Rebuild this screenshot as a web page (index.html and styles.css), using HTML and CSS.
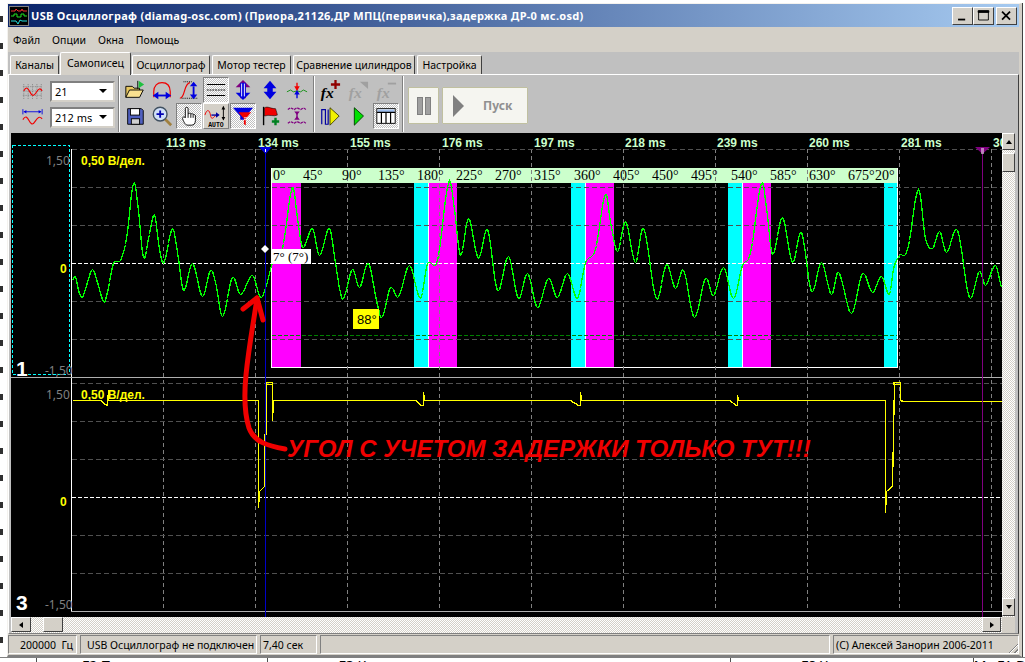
FILE: index.html
```html
<!DOCTYPE html>
<html lang="ru">
<head>
    <meta charset="UTF-8">
    <meta name="viewport" content="width=device-width, initial-scale=1.0">
    <title>USB Осциллограф</title>
    <link rel="stylesheet" href="styles.css">
</head>
<body>
    <div class="desktop">
        <div class="desktop-main">
            <!-- edge of the window behind -->
            <div class="behind-left"></div>

            <div class="window">
                <div class="titlebar">
                    <svg class="app-icon" viewBox="0 0 20 20">
                        <rect width="20" height="20" fill="#000"/>
                        <rect x="0.5" y="0.5" width="19" height="19" fill="none" stroke="#808080"/>
                        <path d="M2 5h4l1-2 2 2h3l1-2 1 2h4" fill="none" stroke="#f03030"/>
                        <path d="M2 10h3v-2h3v3h4v-3h3v2h3" fill="none" stroke="#20e020"/>
                        <path d="M2 15h5l2 3 2-4 2 1h5" fill="none" stroke="#20e0e0"/>
                    </svg>
                    <span class="title-text">USB Осциллограф (diamag-osc.com) (Приора,21126,ДР МПЦ(первичка),задержка ДР-0 мс.osd)</span>
                    <div class="win-btns">
                        <div class="win-btn"><svg viewBox="0 0 20 18"><rect x="5" y="12" width="8" height="2"/></svg></div>
                        <div class="win-btn"><svg viewBox="0 0 20 18"><path d="M4.5 3.5h11v10h-11z M4 3h12v2H4z" fill-rule="nonzero" stroke="#000" fill="none"/><rect x="4" y="3" width="12" height="2"/></svg></div>
                        <div class="win-btn win-btn-close"><svg viewBox="0 0 20 18"><path d="M5 4l9 9M14 4l-9 9" stroke="#000" stroke-width="2" fill="none"/></svg></div>
                    </div>
                </div>

                <div class="menubar">
                    <span>Файл</span><span>Опции</span><span>Окна</span><span>Помощь</span>
                </div>

                <div class="tabs">
                    <div class="tab tab-w1">Каналы</div>
                    <div class="tab tab-active tab-w2">Самописец</div>
                    <div class="tab tab-w3">Осциллограф</div>
                    <div class="tab tab-w4">Мотор тестер</div>
                    <div class="tab tab-w5">Сравнение цилиндров</div>
                    <div class="tab tab-w6">Настройка</div>
                </div>

                <div class="panel">
                    <div class="toolbar">
                        <div class="tool-group group-scale">
                            <svg class="scale-icon" viewBox="0 0 24 20">
                                <path d="M2 2v17M7 2v17M12 2v17M17 2v17M22 2v17M1 5h22M1 10h22M1 15h22" stroke="#808080" stroke-dasharray="1 1" fill="none"/>
                                <path d="M2 10c3-6 5-3 7 1s4 6 7 1 5-6 7-2" stroke="#f00000" stroke-width="1.3" fill="none"/>
                            </svg>
                            <div class="combo">21<i class="combo-arrow"></i></div>
                            <svg class="scale-icon" viewBox="0 0 24 20">
                                <path d="M2 4h20" stroke="#0000e0" stroke-width="1"/>
                                <path d="M5 2l-3 2 3 2zM19 2l3 2-3 2z" fill="#0000e0"/>
                                <path d="M1 1v6M23 1v6" stroke="#0000e0"/>
                                <path d="M1 13c3-5 5-3 7 1s4 6 7 1 5-6 8-3" stroke="#f00000" stroke-width="1.3" fill="none"/>
                            </svg>
                            <div class="combo">212 ms<i class="combo-arrow"></i></div>
                        </div>

                        <div class="tool-group group-icons">
                            <!-- row 1 -->
                            <div class="tool"><svg viewBox="0 0 24 24"><path d="M2 20V8h7l2 2h6v3" fill="#e8c860" stroke="#000"/><path d="M2 20l4-8h15l-4 8z" fill="#f8e090" stroke="#000"/><path d="M15 2v9" stroke="#000"/><path d="M16 2l6 4-6 4z" fill="#20c040"/></svg></div>
                            <div class="tool"><svg viewBox="0 0 24 24"><path d="M3 20V14C3 7 7 4 12 4s9 3 9 10v6" stroke="#f00000" stroke-width="1.3" fill="none"/><path d="M6 18h12" stroke="#0000e0" stroke-width="2"/><path d="M8 14l-6 4 6 4zM16 14l6 4-6 4z" fill="#0000e0"/></svg></div>
                            <div class="tool"><svg viewBox="0 0 24 24"><path d="M2 21c6 0 4-16 11-17" stroke="#f00000" stroke-width="1.3" fill="none"/><path d="M6 3h10M4 21h18" stroke="#000" stroke-dasharray="1 1"/><path d="M17 8v10" stroke="#0000e0" stroke-width="2"/><path d="M13 8l4-5 4 5zM13 17l4 5 4-5z" fill="#0000e0"/></svg></div>
                            <div class="tool tool-on"><svg viewBox="0 0 24 24"><path d="M2 6h20M2 18h20" stroke="#000" stroke-width="1.2"/><path d="M2 12h20" stroke="#000" stroke-dasharray="2 1"/></svg></div>
                            <div class="tool"><svg viewBox="0 0 24 24"><path d="M12 1l8 8h-5v12H9V9H4z" fill="#800080"/><path d="M12 23l8-8h-5V4H9v11H4z" fill="#0000e0"/><path d="M10.5 5v14M13.5 5v14" stroke="#fff"/></svg></div>
                            <div class="tool"><svg viewBox="0 0 24 24"><path d="M12 2l7 8h-4v4h4l-7 8-7-8h4v-4H5z" fill="#0000e0"/></svg></div>
                            <div class="tool"><svg viewBox="0 0 24 24"><path d="M1 14l4-2 3 2 4-1 4 1 3-2 4 2" stroke="#109010" fill="none"/><path d="M12 4v8" stroke="#f00000" stroke-width="1.5"/><path d="M9 8l3 5 3-5z" fill="#f00000"/><path d="M12 14v7" stroke="#0000e0" stroke-width="1.5"/><path d="M9 17l3-5 3 5z" fill="#0000e0"/></svg></div>
                            <!-- row 2 -->
                            <div class="tool"><svg viewBox="0 0 24 24"><path d="M4 4h15l2 2v15H4z" fill="#5060c0" stroke="#000"/><rect x="7" y="4" width="10" height="7" fill="#fff" stroke="#000"/><rect x="8" y="15" width="9" height="6" fill="#d0d0d0" stroke="#000"/></svg></div>
                            <div class="tool"><svg viewBox="0 0 24 24"><path d="M15 15l7 7" stroke="#a08040" stroke-width="3"/><circle cx="10" cy="10" r="7.5" fill="#d0e0f8" stroke="#405060" stroke-width="1.5"/><path d="M6 10h8M10 6v8" stroke="#0000b0" stroke-width="2"/></svg></div>
                            <div class="tool tool-on"><svg viewBox="0 0 24 24"><path d="M8 14V4a1.5 1.5 0 0 1 3 0v6l1-1c1 0 2 0 2 1 1-1 2.500-.5 2.500.5 1-.5 2.500 0 2.500 1.500v5c0 3-2 5-4 5h-4c-3 0-4-2-6-7-.5-1.500 1.500-3 3-1z" fill="#fff" stroke="#000"/><path d="M11 10v4M14 10v4M16.500 11v3" stroke="#000"/></svg></div>
                            <div class="tool tool-up"><svg viewBox="0 0 26 26"><path d="M1 10c2-7 5-6 6 0s3 3 6 0" stroke="#f00000" fill="none" transform="translate(0 2)"/><path d="M8 12h6" stroke="#0000a0" stroke-width="1.5"/><path d="M13 9l4 3-4 3z" fill="#0000a0"/><path d="M21 3v14" stroke="#000"/><path d="M19 6l2-4 2 4zM19 14l2 4 2-4z" fill="#000"/><text class="auto-text" x="13" y="25">AUTO</text></svg></div>
                            <div class="tool tool-on"><svg viewBox="0 0 24 24"><path d="M1 3h22l-8 9v4h-6v-4z" fill="#0000e0"/><path d="M7 8h14l-6 7v7l-2-1v-6z" fill="#f00000"/><path d="M13 14h4M13 16h3" stroke="#fff"/></svg></div>
                            <div class="tool"><svg viewBox="0 0 24 24"><path d="M5 2v20" stroke="#000" stroke-width="1.5"/><path d="M6 3c4-2 6 1 12 1 1 3 2 6 2 7-4 2-9-1-14 1z" fill="#f00000" stroke="#000" stroke-width=".6"/><path d="M18 14v8M14 18h8" stroke="#008020" stroke-width="2.600"/></svg></div>
                            <div class="tool"><svg viewBox="0 0 24 24"><path d="M2 5l3-2 4 2 3-2 4 2 3-2 3 2M2 20l3-2 4 2 3-2 4 2 3-2 3 2" stroke="#800080" stroke-width="1.300" fill="none" stroke-dasharray="3 1"/><path d="M12 8v7" stroke="#800080" stroke-width="1.500"/><path d="M9 7l3 4 3-4zM9 16l3-4 3 4z" fill="#800080"/></svg></div>
                        </div>

                        <div class="tool-group group-fx">
                            <div class="tool"><svg viewBox="0 0 24 24"><text class="fx-text" x="2" y="21">fx</text><path d="M18 1v10M13 6h10" stroke="#900000" stroke-width="2.500"/></svg></div>
                            <div class="tool"><svg viewBox="0 0 24 24"><text class="fx-text fx-off" x="2" y="21">fx</text><path d="M14 3h9v8z" fill="#a0a0a0"/></svg></div>
                            <div class="tool"><svg viewBox="0 0 24 24"><text class="fx-text fx-off" x="2" y="21">fx</text><path d="M14 5h9" stroke="#a0a0a0" stroke-width="2"/></svg></div>
                            <div class="tool"><svg viewBox="0 0 24 24"><path d="M3 21V5h4v16h3V5" stroke="#0000a0" stroke-width="1.300" fill="none"/><path d="M12 3l10 9-10 10z" fill="#f0f000" stroke="#404000"/></svg></div>
                            <div class="tool"><svg viewBox="0 0 24 24"><path d="M8 3l10 9-10 10z" fill="#00e000" stroke="#004000"/></svg></div>
                            <div class="tool tool-on"><svg viewBox="0 0 24 24"><rect x="2" y="4" width="20" height="16" fill="#fff" stroke="#000"/><rect x="3" y="5" width="18" height="3" fill="#a0c0f0"/><path d="M2 8h20M7 8v12M12 8v12M17 8v12" stroke="#000" stroke-width="1.300"/></svg></div>
                        </div>

                        <div class="tool-group group-run">
                            <div class="run-btn run-pause"><i class="pause-bar"></i><i class="pause-bar"></i></div>
                            <div class="run-btn run-start"><i class="start-arrow"></i><span>Пуск</span></div>
                        </div>
                    </div>

                    <div class="work">
                        <svg class="scope" viewBox="11 133 991 484">
                            <rect x="11" y="133" width="991" height="484" fill="#000"/>

                            <!-- degree panel goes under the grid -->
                            <rect class="deg-head" x="271" y="168" width="626" height="15"/>
                            <rect class="deg-pink" x="272" y="183" width="29" height="184"/>
                            <rect class="deg-cyan" x="414" y="183" width="14" height="184"/>
                            <rect class="deg-pink" x="428" y="183" width="29" height="184"/>
                            <rect class="deg-cyan" x="571" y="183" width="14" height="184"/>
                            <rect class="deg-pink" x="585" y="183" width="29" height="184"/>
                            <rect class="deg-cyan" x="728" y="183" width="14" height="184"/>
                            <rect class="deg-pink" x="742" y="183" width="29" height="184"/>
                            <rect class="deg-cyan" x="884" y="183" width="13" height="184"/>
                            <path class="deg-edge" d="M271.500 168V367.500H897.500V168M428.500 183V367M585.500 183V367M742.500 183V367"/>

                            <!-- grid -->
                            <path class="grid-v" d="M163.500 149V611M255.500 149V611M347.500 149V611M439.500 149V611M531.500 149V611M623.500 149V611M715.500 149V611M807.500 149V611M899.500 149V611M991.500 149V611"/>
                            <path class="grid-h" d="M72 149.500H1002M72 187.500H1002M72 225.500H1002M72 301.500H1002M72 339.500H1002M72 383.500H1002M72 421.500H1002M72 459.500H1002M72 535.500H1002M72 573.500H1002"/>
                            <path class="grid-zero" d="M72 263.500H1002M72 497.500H1002"/>
                            <path class="grid-low" d="M272 335.500H897"/>
                            <path class="axis" d="M71.500 149V611"/>
                            <path class="divider" d="M11 377.500H1002M71 611.500H1002"/>
                            <rect class="chan-box" x="12.500" y="145.500" width="57" height="229"/>

                            <!-- time scale -->
                            <text class="time" x="166" y="147">113 ms</text>
                            <text class="time" x="258" y="147">134 ms</text>
                            <text class="time" x="350" y="147">155 ms</text>
                            <text class="time" x="442" y="147">176 ms</text>
                            <text class="time" x="534" y="147">197 ms</text>
                            <text class="time" x="625" y="147">218 ms</text>
                            <text class="time" x="717" y="147">239 ms</text>
                            <text class="time" x="809" y="147">260 ms</text>
                            <text class="time" x="901" y="147">281 ms</text>
                            <text class="time" x="993" y="147">30</text>

                            <!-- degree marks -->
                            <text class="deg" x="273" y="180">0°</text>
                            <text class="deg" x="303" y="180">45°</text>
                            <text class="deg" x="342" y="180">90°</text>
                            <text class="deg" x="378" y="180">135°</text>
                            <text class="deg" x="417" y="180">180°</text>
                            <text class="deg" x="456" y="180">225°</text>
                            <text class="deg" x="495" y="180">270°</text>
                            <text class="deg" x="534" y="180">315°</text>
                            <text class="deg" x="574" y="180">360°</text>
                            <text class="deg" x="613" y="180">405°</text>
                            <text class="deg" x="652" y="180">450°</text>
                            <text class="deg" x="691" y="180">495°</text>
                            <text class="deg" x="731" y="180">540°</text>
                            <text class="deg" x="770" y="180">585°</text>
                            <text class="deg" x="809" y="180">630°</text>
                            <text class="deg" x="848" y="180">675°</text>
                            <text class="deg" x="875" y="180">20°</text>

                            <!-- scale labels -->
                            <text class="scale-num" x="46" y="165">1,50</text>
                            <text class="scale-num" x="45" y="375">-1,50</text>
                            <text class="scale-num" x="46" y="399">1,50</text>
                            <text class="scale-num" x="45" y="609">-1,50</text>
                            <text class="zero-num" x="60" y="273">0</text>
                            <text class="zero-num" x="60" y="506">0</text>
                            <text class="volts" x="81" y="165">0,50 В/дел.</text>
                            <text class="volts" x="81" y="399">0,50 В/дел.</text>
                            <text class="chan-num" x="16" y="376">1</text>
                            <text class="chan-num" x="16" y="610">3</text>

                            <!-- traces, filled in by chart.js -->
                            <polyline id="traceGreen" class="trace-green" points=""/>
                            <polyline id="traceYellow" class="trace-yellow" points=""/>

                            <!-- cursors -->
                            <path class="cursor-blue" d="M265.500 148V617"/>
                            <path class="cursor-blue-head" d="M259 147h13l-6.500 7z"/>
                            <path class="cursor-purple" d="M982.500 148V617"/>
                            <path class="cursor-purple-head" d="M975 147h15l-7.500 7z"/>
                            <path class="cursor-mark" d="M265.500 149v3M981 149h3M981 151h3M981 153h3"/>
                            <rect class="end-mark" x="266.500" y="382.500" width="6" height="2"/>
                            <rect class="end-mark" x="893.500" y="382.500" width="7" height="2"/>

                            <!-- notes -->
                            <path class="dot" d="M265 245l4 4-4 4-4-4z"/>
                            <rect class="tip-white" x="271" y="249" width="40" height="15"/>
                            <text class="tip-text" x="273" y="261">7° (7°)</text>
                            <rect class="tip-yellow" x="353" y="309" width="26" height="20"/>
                            <text class="tip-yellow-text" x="357" y="324">88°</text>

                            <!-- arrow and comment drawn over the picture -->
                            <path class="red-arrow" d="M257 298C254 320 249 345 246 375C244 395 245 415 249 428C254 442 268 446 285 449"/>
                            <path class="red-arrow" d="M243 309L257 298L263 320"/>
                            <text class="comment" x="287" y="457">УГОЛ С УЧЕТОМ ЗАДЕРЖКИ ТОЛЬКО ТУТ!!!</text>
                        </svg>

                        <div class="vscroll">
                            <div class="sb-btn sb-up"><i class="tri tri-up"></i></div>
                            <div class="sb-thumb"></div>
                            <div class="sb-btn sb-down"><i class="tri tri-down"></i></div>
                        </div>

                        <div class="hscroll">
                            <div class="sb-btn sb-left"><i class="tri tri-left"></i></div>
                            <div class="sb-thumb-h"></div>
                            <div class="sb-btn sb-right"><i class="tri tri-right"></i></div>
                        </div>
                        <div class="corner"></div>
                    </div>
                </div>

                <div class="statusbar">
                    <div class="stat stat-freq">200000&nbsp; Гц</div>
                    <div class="stat">USB Осциллограф не подключен</div>
                    <div class="stat">7,40 сек</div>
                    <div class="stat"></div>
                    <div class="stat stat-copy">(C) Алексей Занорин 2006-2011<i class="grip"></i></div>
                </div>
            </div>
        </div>

        <div class="behind-bottom">
            <div class="behind-cell cell-a"></div>
            <div class="behind-cell cell-b">F2 П</div>
            <div class="behind-cell cell-c">F3 К</div>
            <div class="behind-cell cell-d">F8 Х</div>
            <div class="behind-cell cell-e">M↑ F1 B</div>
        </div>
    </div>
    <script src="chart.js"></script>
</body>
</html>
```

FILE: styles.css
```css
* {
    margin: 0;
    padding: 0;
    box-sizing: border-box;
}

:root {
    --face: #d4d0c8;
    --tool: #c0c0c0;
    --shadow: #808080;
    --ui-font: "Noto Sans", "Liberation Sans", sans-serif;
}

body {
    width: 1025px;
    height: 662px;
    overflow: hidden;
    background: #fff;
    font-family: var(--ui-font);
    font-size: 10.5px;
    color: #000;
}

svg {
    display: block;
}

.desktop {
    display: flex;
    flex-direction: column;
    height: 662px;
}

.desktop-main {
    display: flex;
    height: 657px;
}

.behind-left {
    width: 7px;
    background: repeating-linear-gradient(to bottom, transparent 0 16px, #303030 16px 22px, transparent 22px 27px) 0 0 / 3px 100% no-repeat;
}

.window {
    width: 1015px;
    margin-top: 3px;
    display: flex;
    flex-direction: column;
    background: var(--face);
    border-top: 1px solid #f4f2ee;
    border-left: 1px solid #f4f2ee;
    border-right: 3px solid var(--face);
    border-bottom: 2px solid #808080;
    box-shadow: 1px 0 0 #404040;
}

/* title bar */
.titlebar {
    height: 23px;
    display: flex;
    align-items: center;
    padding-left: 1px;
    background: linear-gradient(to right, #0a246a, #a6caf0);
    color: #fff;
}

.app-icon {
    width: 20px;
    height: 20px;
    margin-right: 2px;
}

.title-text {
    flex: 1;
    font-weight: 700;
    font-size: 11px;
    letter-spacing: 0.31px;
    white-space: nowrap;
}

.win-btns {
    display: flex;
    gap: 0;
    padding-right: 2px;
}

.win-btn {
    width: 21px;
    height: 18px;
    background: var(--face);
    border: 1px solid;
    border-color: #fff #404040 #404040 #fff;
}

.win-btn svg {
    width: 19px;
    height: 16px;
}

.win-btn-close {
    margin-left: 2px;
}

/* menu */
.menubar {
    height: 25px;
    display: flex;
    align-items: center;
    gap: 12px;
    padding-left: 5px;
}

/* tabs */
.tabs {
    height: 22px;
    display: flex;
    align-items: flex-end;
    gap: 2px;
    padding-left: 2px;
    background: var(--tool);
}

.tab {
    height: 19px;
    display: flex;
    align-items: center;
    justify-content: center;
    background: var(--face);
    border: 1px solid;
    border-color: #fff #404040 transparent #fff;
    border-bottom: 0;
    border-radius: 2px 2px 0 0;
    white-space: nowrap;
}

.tab-active {
    height: 23px;
    margin: 0 -1px -1px;
    padding-bottom: 3px;
    position: relative;
    z-index: 1;
}

.tab-w1 { width: 49px; }
.tab-w2 { width: 71px; }
.tab-w3 { width: 78px; }
.tab-w4 { width: 79px; }
.tab-w5 { width: 122px; }
.tab-w6 { width: 65px; }

/* main panel */
.panel {
    height: 560px;
    display: flex;
    flex-direction: column;
    background: var(--tool);
    border-top: 1px solid #fff;
    border-left: 1px solid #fff;
    border-right: 1px solid #404040;
    border-bottom: 1px solid #808080;
}

.toolbar {
    height: 58px;
    display: flex;
}

.tool-group {
    height: 56px;
    margin-top: 1px;
    border-right: 1px solid var(--shadow);
    box-shadow: 1px 0 0 #fff;
}

.group-scale {
    width: 110px;
    display: grid;
    grid-template-columns: 28px 65px;
    grid-template-rows: 26px 26px;
    align-content: center;
    align-items: center;
    justify-items: center;
    column-gap: 4px;
    padding-left: 9px;
}

.scale-icon {
    width: 21px;
    height: 18px;
}

.combo {
    width: 65px;
    height: 21px;
    display: flex;
    align-items: center;
    justify-content: space-between;
    padding: 0 6px 0 3px;
    background: #fff;
    border: 2px solid;
    border-color: #808080 #d4d0c8 #d4d0c8 #808080;
    font-size: 11px;
}

.combo-arrow {
    width: 0;
    height: 0;
    border-left: 4px solid transparent;
    border-right: 4px solid transparent;
    border-top: 4px solid #000;
}

.group-icons {
    width: 195px;
    padding: 1px 0 0 3px;
    display: grid;
    grid-template-columns: repeat(7, 27px);
    grid-template-rows: 26px 26px;
}

.group-fx {
    width: 89px;
    padding: 1px 0 0 3px;
    display: grid;
    grid-template-columns: repeat(3, 28px);
    grid-template-rows: 26px 26px;
}

.tool {
    width: 26px;
    height: 26px;
    display: flex;
    align-items: center;
    justify-content: center;
}

.tool svg {
    width: 22px;
    height: 22px;
}

.tool-on {
    background: repeating-conic-gradient(#c0c0c0 0 25%, #fff 0 50%) 0 0 / 2px 2px;
    border: 1px solid;
    border-color: #808080 #fff #fff #808080;
}

.tool-up {
    background: var(--face);
    border: 1px solid;
    border-color: #fff #808080 #808080 #fff;
}

.tool-up svg {
    width: 24px;
    height: 24px;
}

.auto-text {
    font-family: "Liberation Mono", monospace;
    font-size: 7px;
    font-weight: 700;
    text-anchor: middle;
}

.fx-text {
    font-family: "Liberation Serif", serif;
    font-style: italic;
    font-weight: 700;
    font-size: 17px;
    fill: #000;
}

.fx-off {
    fill: #a0a0a0;
}

.group-run {
    border: 0;
    box-shadow: none;
    padding: 11px 0 0 5px;
    display: flex;
    gap: 3px;
}

.run-btn {
    height: 37px;
    display: flex;
    align-items: center;
    background: #f5f5f0;
    border: 1px solid #c0c0a0;
    border-radius: 1px;
}

.run-pause {
    width: 31px;
    justify-content: center;
    gap: 2px;
}

.pause-bar {
    width: 6px;
    height: 18px;
    background: #a0a0a0;
    border: 1px solid #808080;
}

.run-start {
    width: 86px;
    padding-left: 10px;
    font-weight: 700;
    font-size: 12px;
    color: #909090;
}

.start-arrow {
    width: 0;
    height: 0;
    border-left: 11px solid #808080;
    border-top: 11px solid transparent;
    border-bottom: 11px solid transparent;
    margin-right: 19px;
}

/* chart and scrollbars */
.work {
    padding-left: 2px;
    display: grid;
    grid-template-columns: 991px 13px;
    grid-template-rows: 484px 16px;
}

.scope {
    width: 991px;
    height: 484px;
}

.grid-v,
.grid-h,
.grid-zero,
.grid-low,
.axis,
.divider,
.chan-box,
.cursor-blue,
.cursor-purple,
.deg-edge,
.end-mark,
.trace-green,
.trace-yellow {
    fill: none;
    shape-rendering: crispEdges;
}

.grid-v {
    stroke: #808080;
    stroke-dasharray: 4 3;
}

.grid-h {
    stroke: #505050;
    stroke-dasharray: 5 3;
}

.grid-zero {
    stroke: #fff;
    stroke-dasharray: 4 2;
}

.grid-low {
    stroke: #008000;
    stroke-dasharray: 4 2;
}

.axis {
    stroke: #fff;
}

.divider {
    stroke: #b0b0b0;
}

.chan-box {
    stroke: #00ffff;
    stroke-dasharray: 3 2;
}

.deg-head {
    fill: #ccffcc;
}

.deg-pink {
    fill: #ff00ff;
}

.deg-cyan {
    fill: #00ffff;
}

.deg-edge {
    stroke: #fff;
}

.time {
    font-family: "Liberation Sans", sans-serif;
    font-weight: 700;
    font-size: 12px;
    fill: #ccffcc;
}

.deg {
    font-family: "Liberation Serif", serif;
    font-size: 14px;
    fill: #000;
}

.scale-num {
    font-family: var(--ui-font);
    font-size: 12px;
    fill: #808080;
}

.zero-num {
    font-family: "Liberation Sans", sans-serif;
    font-weight: 700;
    font-size: 12px;
    fill: #ffff00;
}

.volts {
    font-family: "Liberation Sans", sans-serif;
    font-weight: 700;
    font-size: 12px;
    fill: #ffff00;
}

.chan-num {
    font-family: "Liberation Sans", sans-serif;
    font-weight: 700;
    font-size: 21px;
    fill: #fff;
}

.trace-green {
    stroke: #00ff00;
    stroke-width: 1.3;
}

.trace-yellow {
    stroke: #ffff00;
    stroke-width: 1.3;
}

.cursor-blue {
    stroke: #0000c8;
}

.cursor-blue-head {
    fill: #0000e0;
}

.cursor-purple {
    stroke: #800080;
}

.cursor-purple-head {
    fill: #800080;
}

.cursor-mark {
    stroke: #fff;
    fill: none;
}

.end-mark {
    stroke: #ffff00;
}

.dot {
    fill: #fff;
}

.tip-white {
    fill: #fff;
}

.tip-text {
    font-family: "Liberation Serif", serif;
    font-size: 13px;
    fill: #000;
}

.tip-yellow {
    fill: #ffff00;
}

.tip-yellow-text {
    font-family: "Liberation Sans", sans-serif;
    font-size: 13px;
    fill: #000;
}

.red-arrow {
    fill: none;
    stroke: #f00000;
    stroke-width: 5;
    stroke-linecap: round;
    stroke-linejoin: round;
}

.comment {
    font-family: "Liberation Sans", sans-serif;
    font-weight: 700;
    font-style: italic;
    font-size: 24px;
    fill: #f00000;
}

.vscroll {
    display: flex;
    flex-direction: column;
    justify-content: flex-start;
    background: repeating-conic-gradient(#d4d0c8 0 25%, #fff 0 50%) 0 0 / 2px 2px;
}

.sb-btn {
    display: flex;
    align-items: center;
    justify-content: center;
    flex: none;
    background: var(--face);
    border: 1px solid;
    border-color: #fff #404040 #404040 #fff;
}

.sb-up {
    height: 17px;
}

.sb-down {
    height: 18px;
    margin-top: auto;
    margin-bottom: 1px;
}

.sb-thumb {
    height: 19px;
    margin-top: 3px;
    background: var(--face);
    border: 1px solid;
    border-color: #fff #404040 #404040 #fff;
}

.hscroll {
    height: 16px;
    display: flex;
    background: repeating-conic-gradient(#d4d0c8 0 25%, #fff 0 50%) 0 0 / 2px 2px;
}

.sb-left {
    width: 20px;
    height: 15px;
}

.sb-right {
    width: 19px;
    height: 15px;
    margin-left: auto;
    margin-right: 1px;
}

.sb-thumb-h {
    width: 20px;
    height: 15px;
    margin-left: 12px;
    background: var(--face);
    border: 1px solid;
    border-color: #fff #404040 #404040 #fff;
}

.corner {
    background: var(--face);
}

.tri {
    width: 0;
    height: 0;
    border: 3px solid transparent;
}

.tri-up {
    border-top: 0;
    border-bottom: 4px solid #000;
}

.tri-down {
    border-bottom: 0;
    border-top: 4px solid #000;
}

.tri-left {
    border-left: 0;
    border-right: 4px solid #000;
}

.tri-right {
    border-right: 0;
    border-left: 4px solid #000;
}

/* status bar */
.statusbar {
    flex: 1;
    display: grid;
    grid-template-columns: 69px 177px 57px 510px 1fr;
    gap: 3px;
    padding-top: 1px;
}

.stat {
    height: 19px;
    display: flex;
    align-items: center;
    padding-left: 2px;
    white-space: nowrap;
    border: 1px solid;
    border-color: #808080 #fff #fff #808080;
}

.stat:nth-child(2) {
    padding-left: 6px;
}

.stat-freq {
    padding-left: 11px;
}

.stat-copy {
    position: relative;
}

.grip {
    position: absolute;
    right: 0;
    bottom: 0;
    width: 12px;
    height: 12px;
    background: repeating-linear-gradient(135deg, transparent 0 2px, #808080 2px 3px, #fff 3px 4px);
    clip-path: polygon(100% 0, 100% 100%, 0 100%);
}

/* window behind, bottom edge */
.behind-bottom {
    height: 5px;
    display: flex;
    overflow: hidden;
    font-size: 14px;
    line-height: 16px;
    border-top: 1px solid #808080;
}

.behind-cell {
    border-right: 1px solid #505050;
    white-space: nowrap;
}

.cell-a { width: 37px; }
.cell-b { width: 231px; padding-left: 45px; }
.cell-c { width: 464px; padding-left: 71px; }
.cell-d { width: 243px; padding-left: 70px; }
.cell-e { flex: 1; border: 0; }
```

FILE: chart.js
```js
// scope traces, page coordinates read off the recording
const greenPoints = [
    [72,280],[75,276],[78,290],[82,297],[86,285],[92,269],[97,282],[103,301],[106,295],[113,263],
    [120,260],[126,238],[133,183],[137,202],[143,257],[148,238],[154,214],[158,242],[163,263],[172,228],
    [177,252],[183,290],[192,263],[202,296],[210,270],[215,282],[222,316],[232,277],[240,294],[252,275],
    [260,297],[265,288],[272,262],[282,248],[292,187],[297,218],[302,247],[312,228],[319,255],[329,228],
    [335,262],[340,292],[343,298],[352,269],[359,287],[368,263],[378,308],[382,316],[390,287],[398,296],
    [409,265],[420,298],[427,263],[437,260],[448,183],[453,202],[460,255],[468,218],[478,258],[487,229],
    [497,290],[508,256],[518,298],[527,273],[537,307],[548,278],[557,297],[567,273],[577,298],[585,262],
    [595,249],[605,194],[610,222],[617,251],[625,221],[635,262],[643,228],[656,298],[666,264],[675,288],
    [683,270],[694,317],[705,278],[713,295],[723,267],[733,298],[742,265],[750,252],[761,183],[766,208],
    [772,254],[782,217],[792,262],[801,232],[811,291],[821,262],[831,294],[838,272],[851,313],[862,273],
    [872,292],[881,276],[889,294],[893,268],[899,255],[907,249],[918,189],[925,238],[932,248],[939,231],
    [946,252],[957,230],[969,297],[979,271],[985,285],[995,265],[1002,290]
];

const yellowPoints = [
    [72,400],[100,400],[105,404],[107,405],[108,390],[108,400],[258,400],[258,507],[259,491],[264,486],
    [264,434],[266,434],[266,382],[272,382],[272,420],[273,400],[415,400],[421,405],[423,405],[423,392],
    [424,400],[570,400],[578,405],[580,405],[580,392],[581,400],[729,400],[736,405],[737,405],[737,395],
    [738,400],[885,400],[885,512],[886,491],[892,486],[893,434],[894,382],[900,382],[900,400],[903,401],
    [1002,401]
];

// catmull-rom, one sample per pixel so it steps like the original
function smooth(points) {
    const out = [];
    for (let i = 0; i < points.length - 1; i++) {
        const p0 = points[Math.max(i - 1, 0)];
        const p1 = points[i];
        const p2 = points[i + 1];
        const p3 = points[Math.min(i + 2, points.length - 1)];
        const steps = Math.max(Math.round(p2[0] - p1[0]), 1);
        for (let s = 0; s < steps; s++) {
            const t = s / steps;
            const y = 0.5 * (2 * p1[1] + (p2[1] - p0[1]) * t
                + (2 * p0[1] - 5 * p1[1] + 4 * p2[1] - p3[1]) * t * t
                + (3 * p1[1] - p0[1] - 3 * p2[1] + p3[1]) * t * t * t);
            out.push((p1[0] + s + 0.5) + "," + (Math.round(y) + 0.5));
        }
    }
    return out.join(" ");
}

document.getElementById("traceGreen").setAttribute("points", smooth(greenPoints));
document.getElementById("traceYellow").setAttribute("points",
    yellowPoints.map(p => (p[0] + 0.5) + "," + (p[1] + 0.5)).join(" "));
```
